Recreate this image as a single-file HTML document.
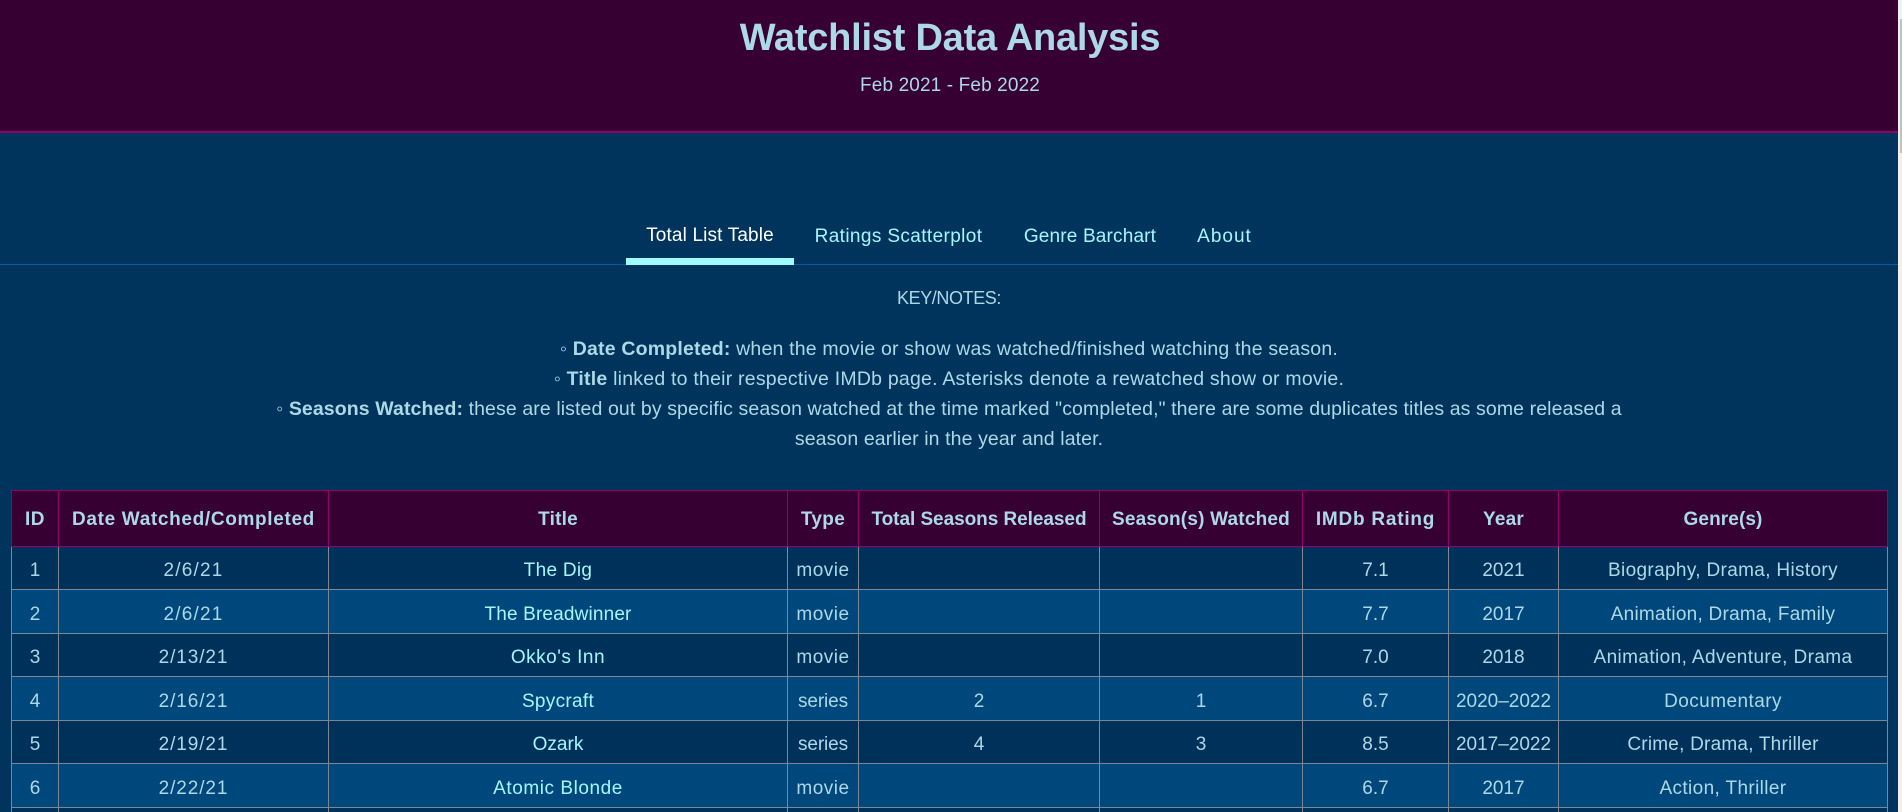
<!DOCTYPE html>
<html lang="en">
<head>
<meta charset="utf-8">
<title>Watchlist Data Analysis</title>
<style>
html,body{margin:0;padding:0;width:1902px;height:812px;overflow:hidden;background:#00345c;}
body{position:relative;font-family:"Liberation Sans",sans-serif;color:#add8e6;}
a{color:#a3f7ff;text-decoration:none;}
header{position:absolute;left:0;top:0;width:1898px;height:131px;background:#360033;border-bottom:2px solid #96006e;text-align:center;}
h1{position:absolute;left:2px;right:0;top:14px;margin:0;font-size:38px;letter-spacing:-.23px;line-height:48px;font-weight:700;color:#add8e6;}
.sub{position:absolute;left:2px;right:0;top:73px;margin:0;font-size:19px;letter-spacing:.13px;line-height:26px;}
nav{position:absolute;left:0;top:200px;width:1898px;height:64px;border-bottom:1px solid #005ea8;}
nav a{position:absolute;top:23px;line-height:28px;font-size:19px;text-align:center;white-space:nowrap;}
nav a.active{color:#fff;top:22px;}
.bar{position:absolute;left:626px;top:258px;width:168px;height:7px;background:#9ffbff;}
.notes{position:absolute;left:0;top:283px;width:1898px;text-align:center;font-size:19.5px;line-height:30px;}
.notes p{margin:0;}
.notes .k{margin-bottom:21px;font-size:18px;letter-spacing:-.4px;}
table{position:absolute;left:11px;top:490px;width:1876px;table-layout:fixed;border-collapse:collapse;font-size:19px;text-align:center;}
th{background:#360033;border:1px solid #96006e;font-weight:700;height:56px;padding:3px 0 0;box-sizing:border-box;white-space:nowrap;}
td{border:1px solid #7b8794;padding:6px 0 0;box-sizing:border-box;white-space:nowrap;}
tbody tr{height:43px;}
tbody tr:nth-child(even){height:44px;background:#00477c;}
tbody tr:nth-child(odd){background:#00315a;}
.d{letter-spacing:.9px;}
.m{letter-spacing:.5px;}
.sb{position:absolute;left:1898px;top:0;width:4px;height:812px;background:#f1f1f1;}
.sb i{position:absolute;left:2px;top:19px;width:2px;height:134px;background:#c1c1c1;}
</style>
</head>
<body>
<header>
<h1>Watchlist Data Analysis</h1>
<p class="sub">Feb 2021 - Feb 2022</p>
</header>
<nav>
<a class="active" href="#" style="left:626px;width:168px;letter-spacing:.15px;">Total List Table</a>
<a href="#" style="left:795px;width:207px;letter-spacing:.38px;">Ratings Scatterplot</a>
<a href="#" style="left:1004px;width:172px;letter-spacing:.17px;">Genre Barchart</a>
<a href="#" style="left:1177px;width:95px;letter-spacing:1px;">About</a>
</nav>
<div class="bar"></div>
<div class="notes">
<p class="k">KEY/NOTES:</p>
<p style="letter-spacing:.19px;">◦ <b>Date Completed:</b> when the movie or show was watched/finished watching the season.</p>
<p style="letter-spacing:.22px;">◦ <b>Title</b> linked to their respective IMDb page. Asterisks denote a rewatched show or movie.</p>
<p style="letter-spacing:.1px;">◦ <b>Seasons Watched:</b> these are listed out by specific season watched at the time marked "completed," there are some duplicates titles as some released a<br>season earlier in the year and later.</p>
</div>
<table>
<colgroup><col style="width:47px"><col style="width:270px"><col style="width:459px"><col style="width:71px"><col style="width:241px"><col style="width:203px"><col style="width:146px"><col style="width:110px"><col style="width:329px"></colgroup>
<thead><tr><th style="letter-spacing:.5px">ID</th><th style="letter-spacing:.66px">Date Watched/Completed</th><th style="letter-spacing:.2px">Title</th><th style="letter-spacing:.3px">Type</th><th style="letter-spacing:-.05px">Total Seasons Released</th><th style="letter-spacing:.2px">Season(s) Watched</th><th style="letter-spacing:.77px">IMDb Rating</th><th style="letter-spacing:.2px">Year</th><th style="letter-spacing:.1px">Genre(s)</th></tr></thead>
<tbody>
<tr><td>1</td><td style="letter-spacing:1.2px">2/6/21</td><td><a href="#" style="letter-spacing:.3px">The Dig</a></td><td class="m">movie</td><td></td><td></td><td>7.1</td><td>2021</td><td style="letter-spacing:.34px">Biography, Drama, History</td></tr>
<tr><td>2</td><td style="letter-spacing:1.2px">2/6/21</td><td><a href="#" style="letter-spacing:.16px">The Breadwinner</a></td><td class="m">movie</td><td></td><td></td><td>7.7</td><td>2017</td><td style="letter-spacing:.25px">Animation, Drama, Family</td></tr>
<tr><td>3</td><td class="d">2/13/21</td><td><a href="#" style="letter-spacing:.5px">Okko's Inn</a></td><td class="m">movie</td><td></td><td></td><td>7.0</td><td>2018</td><td style="letter-spacing:.4px">Animation, Adventure, Drama</td></tr>
<tr><td>4</td><td class="d">2/16/21</td><td><a href="#" style="letter-spacing:.3px">Spycraft</a></td><td style="letter-spacing:-.1px">series</td><td>2</td><td>1</td><td>6.7</td><td>2020–2022</td><td style="letter-spacing:.44px">Documentary</td></tr>
<tr><td>5</td><td class="d">2/19/21</td><td><a href="#">Ozark</a></td><td style="letter-spacing:-.1px">series</td><td>4</td><td>3</td><td>8.5</td><td>2017–2022</td><td style="letter-spacing:.22px">Crime, Drama, Thriller</td></tr>
<tr><td>6</td><td class="d">2/22/21</td><td><a href="#" style="letter-spacing:.55px">Atomic Blonde</a></td><td class="m">movie</td><td></td><td></td><td>6.7</td><td>2017</td><td style="letter-spacing:.37px">Action, Thriller</td></tr>
<tr><td></td><td></td><td></td><td></td><td></td><td></td><td></td><td></td><td></td></tr>
</tbody>
</table>
<div class="sb"><i></i></div>
</body>
</html>
